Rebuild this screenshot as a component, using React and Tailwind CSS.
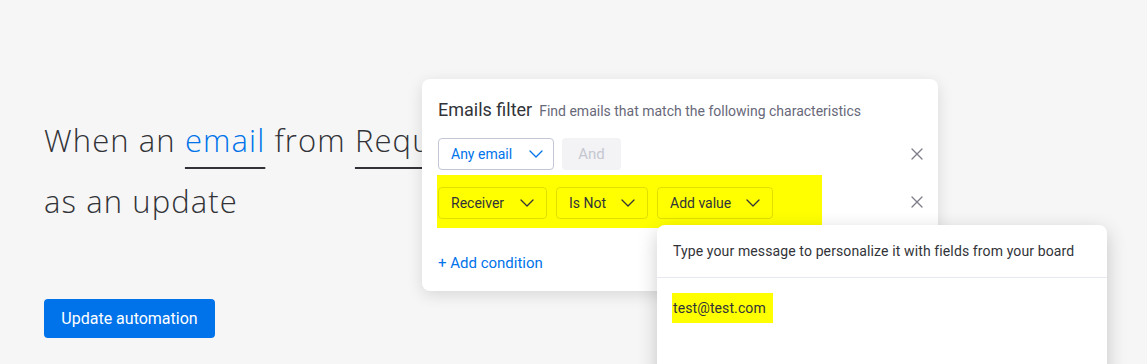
import React from "react";

const Chevron = ({ color = "#323338" }) => (
  <svg width="14" height="8" viewBox="0 0 14 8" fill="none">
    <path d="M1 1 L7 7 L13 1" stroke={color} strokeWidth="1.3" strokeLinecap="round" strokeLinejoin="round" />
  </svg>
);

const XIcon = () => (
  <svg width="12" height="12" viewBox="0 0 12 12" fill="none">
    <path d="M1 1 L11 11 M11 1 L1 11" stroke="#7b7c88" strokeWidth="1.3" strokeLinecap="round" />
  </svg>
);

function Dropdown({ label, w, variant }) {
  if (variant === "blue") {
    return (
      <div className={`flex h-8 items-center justify-between rounded-[4px] border border-[#c3c6d4] bg-white pl-3 pr-[10px] ${w}`}>
        <span className="text-[14px] text-[#0073ea]">{label}</span>
        <Chevron color="#0073ea" />
      </div>
    );
  }
  return (
    <div className={`flex h-8 items-center justify-between rounded-[4px] border border-[rgba(0,0,0,0.12)] pl-3 pr-3 ${w}`}>
      <span className="text-[14px] text-[#323338]">{label}</span>
      <Chevron />
    </div>
  );
}

export default function App() {
  return (
    <div className="relative h-[364px] w-full overflow-hidden bg-[#f6f6f6] font-['Roboto',sans-serif]">
      <div className="flex flex-col pl-[44px] pt-[110px]">
        <div className="font-['Open_Sans',sans-serif] text-[31px] font-light leading-[61px] tracking-[1.1px] text-[#323338]">
          <div className="whitespace-nowrap">
            When an{" "}
            <span className="text-[#0073ea] underline decoration-[#323338] decoration-2 underline-offset-[15px]">email</span>{" "}
            from{" "}
            <span className="underline decoration-[#323338] decoration-2 underline-offset-[15px]">Requester</span>
          </div>
          <div className="whitespace-nowrap">as an update</div>
        </div>
        <button className="mt-[67px] flex h-[39px] w-[171px] items-center justify-center rounded-[4px] bg-[#0073ea] text-[16px] text-white">
          Update automation
        </button>
      </div>

      <div className="absolute left-[422px] top-[79px] h-[212px] w-[516px] rounded-[8px] bg-white shadow-[0_4px_16px_rgba(0,0,0,0.12)]">
        <div className="flex flex-col pl-4 pr-[15px] pt-[17px]">
          <div className="flex items-baseline gap-[7px]">
            <span className="text-[18px] text-[#323338]">Emails filter</span>
            <span className="text-[14px] text-[#676879]">Find emails that match the following characteristics</span>
          </div>
          <div className="mt-[15px] flex items-center">
            <Dropdown label="Any email" w="w-[116px]" variant="blue" />
            <div className="ml-[8px] flex h-8 w-[59px] items-center justify-center rounded-[4px] bg-[#f3f3f5] text-[15px] text-[#c5c7d0]">
              And
            </div>
            <div className="ml-auto">
              <XIcon />
            </div>
          </div>
          <div className="mt-[5px] flex items-center">
            <div className="-ml-px flex w-[385px] gap-[9px] bg-[#ffff00] pb-[9px] pl-px pt-[12px]">
              <Dropdown label="Receiver" w="w-[109px]" />
              <Dropdown label="Is Not" w="w-[92px]" />
              <Dropdown label="Add value" w="w-[116px]" />
            </div>
            <div className="ml-auto">
              <XIcon />
            </div>
          </div>
          <div className="mt-[24px] text-[15px] text-[#0073ea]">+ Add condition</div>
        </div>
      </div>

      <div className="absolute left-[657px] top-[225px] h-[170px] w-[450px] rounded-[8px] bg-white shadow-[0_6px_20px_rgba(0,0,0,0.2)]">
        <div className="flex h-[53px] items-center border-b border-[#e6e9ef] pl-4 text-[14px] tracking-[0.12px] text-[#323338]">
          Type your message to personalize it with fields from your board
        </div>
        <div className="pl-[15px] pt-[15px]">
          <span className="inline-flex h-[30px] items-center bg-[#ffff00] pl-px pr-[7px] text-[14px] tracking-[0.1px] text-[#323338]">
            test@test.com
          </span>
        </div>
      </div>
    </div>
  );
}
